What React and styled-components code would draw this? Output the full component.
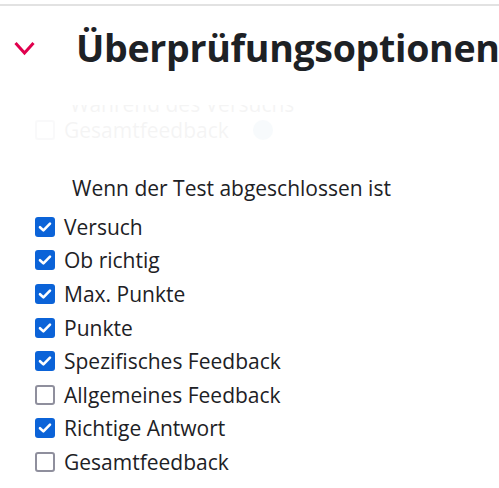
import React from "react";
import styled, { createGlobalStyle } from "styled-components";

const GlobalStyle = createGlobalStyle`
  html, body {
    margin: 0;
    padding: 0;
    background: #fff;
    overflow: hidden;
  }
  body {
    font-family: "Open Sans", "Noto Sans", sans-serif;
    color: #1d2125;
  }
`;

const Page = styled.div`
  width: 499px;
  height: 488px;
  padding-top: 4px;
  box-sizing: border-box;
`;

const Section = styled.section`
  border-top: 2px solid #e2e2e2;
`;

const Header = styled.div`
  display: flex;
  align-items: center;
  height: 80px;
  padding-left: 14px;
  margin-top: 1px;
`;

const Chevron = styled.svg`
  width: 21px;
  height: 15px;
  flex-shrink: 0;
  margin-right: 41px;
  margin-top: 2px;
`;

const Title = styled.h3`
  margin: 0;
  font-size: 37.5px;
  font-weight: 700;
  white-space: nowrap;
  letter-spacing: -0.3px;
`;

const Faded = styled.div`
  height: 36px;
  overflow: hidden;
  opacity: 0.045;
  margin-top: 18px;
`;

const FadedInner = styled.div`
  margin-top: -14px;
`;

const FadedHeading = styled.div`
  padding-left: 70px;
  font-size: 21px;
  line-height: 26px;
`;

const FadedRow = styled.div`
  display: flex;
  align-items: center;
  padding-left: 35px;
  font-size: 21px;
  height: 26px;
`;

const HelpDot = styled.span`
  width: 20px;
  height: 20px;
  border-radius: 50%;
  background: #5aa0c8;
  margin-left: 24px;
`;

const GroupLabel = styled.div`
  padding-left: 72px;
  margin-top: 34px;
  font-size: 21px;
  line-height: 26px;
`;

const List = styled.div`
  display: flex;
  flex-direction: column;
  padding-left: 35px;
  margin-top: 9px;
`;

const Row = styled.label`
  display: flex;
  align-items: center;
  height: 33.6px;
  font-size: 21px;
  white-space: nowrap;
`;

const Box = styled.span`
  width: 20px;
  height: 20px;
  box-sizing: border-box;
  border-radius: 3px;
  margin-right: 9px;
  flex-shrink: 0;
  display: flex;
  align-items: center;
  justify-content: center;
  background: ${(p) => (p.$checked ? "#0b63d8" : "#fff")};
  border: ${(p) => (p.$checked ? "none" : "2px solid #8f8f9d")};
`;

const options = [
  ["Versuch", true],
  ["Ob richtig", true],
  ["Max. Punkte", true],
  ["Punkte", true],
  ["Spezifisches Feedback", true],
  ["Allgemeines Feedback", false],
  ["Richtige Antwort", true],
  ["Gesamtfeedback", false],
];

const Check = () => (
  <svg width="14" height="12" viewBox="0 0 14 12">
    <path
      d="M2 6.2 L5.4 9.4 L12 2.6"
      fill="none"
      stroke="#fff"
      strokeWidth="2.6"
      strokeLinecap="round"
      strokeLinejoin="round"
    />
  </svg>
);

export default function App() {
  return (
    <>
      <GlobalStyle />
      <Page>
        <Section>
          <Header>
            <Chevron viewBox="0 0 21 15">
              <path
                d="M1.5 2 L10.5 12 L19.5 2"
                fill="none"
                stroke="#e0004d"
                strokeWidth="3"
              />
            </Chevron>
            <Title>Überprüfungsoptionen</Title>
          </Header>
          <Faded>
            <FadedInner>
              <FadedHeading>Während des Versuchs</FadedHeading>
              <FadedRow>
                <Box />
                Gesamtfeedback
                <HelpDot />
              </FadedRow>
            </FadedInner>
          </Faded>
          <GroupLabel>Wenn der Test abgeschlossen ist</GroupLabel>
          <List>
            {options.map(([label, checked]) => (
              <Row key={label}>
                <Box $checked={checked}>{checked && <Check />}</Box>
                {label}
              </Row>
            ))}
          </List>
        </Section>
      </Page>
    </>
  );
}
